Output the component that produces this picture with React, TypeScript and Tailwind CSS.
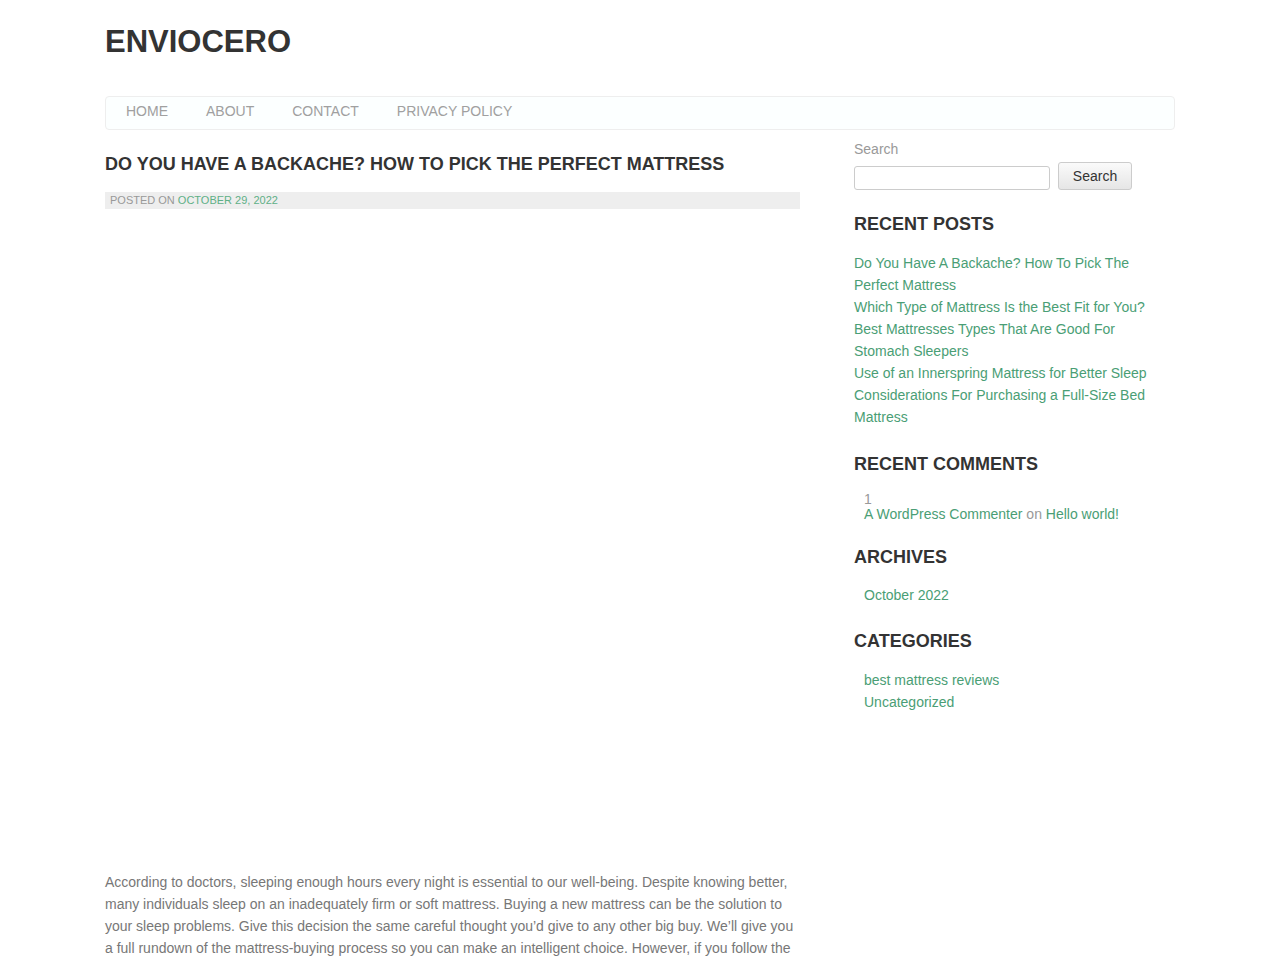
import React from "react";

// Sidebar link lists
const recentPosts = [
  "Do You Have A Backache? How To Pick The Perfect Mattress",
  "Which Type of Mattress Is the Best Fit for You?",
  "Best Mattresses Types That Are Good For Stomach Sleepers",
  "Use of an Innerspring Mattress for Better Sleep",
  "Considerations For Purchasing a Full-Size Bed Mattress",
];

const navItems = ["Home", "About", "Contact", "Privacy Policy"];

const WidgetTitle = ({ children }: { children: React.ReactNode }) => (
  <h2 className="text-[18px] font-bold uppercase text-[#333] leading-[24px]">{children}</h2>
);

const App = () => {
  return (
    <div className="min-h-[960px] bg-white font-['Liberation_Sans',Arial,sans-serif] text-[14px] text-[#777]">
      <div className="mx-auto w-[1070px]">
        {/* Header */}
        <header className="pt-[24px]">
          <h1 className="text-[31px] font-bold leading-[36px] text-[#333] uppercase">Enviocero</h1>
        </header>

        <nav className="mt-[36px] flex h-[34px] items-center rounded-[4px] border border-[#eeeeee] bg-[#fcffff] px-[20px] pb-[3px]">
          <ul className="flex gap-[38px]">
            {navItems.map((item) => (
              <li key={item}>
                <a href="#" className="uppercase text-[#a0a0a0] leading-[20px]">
                  {item}
                </a>
              </li>
            ))}
          </ul>
        </nav>

        <div className="flex">
          {/* Main column */}
          <main className="w-[695px] pt-[24px]">
            <h1 className="text-[18px] font-bold uppercase leading-[20px] text-[#333]">
              Do You Have A Backache? How To Pick The Perfect Mattress
            </h1>
            <div className="mt-[18px] flex h-[17px] items-center bg-[#eeeeee] px-[5px] pb-[1px] text-[11px] uppercase leading-[17px]">
              <span className="text-[#999]">Posted on&nbsp;</span>
              <a href="#" className="text-[#5fb087]">October 29, 2022</a>
            </div>
            {/* featured image area */}
            <div className="h-[662px]" />
            <p className="leading-[22px] text-[#777]">
              According to doctors, sleeping enough hours every night is essential to our well-being. Despite knowing better,
              many individuals sleep on an inadequately firm or soft mattress. Buying a new mattress can be the solution to
              your sleep problems. Give this decision the same careful thought you’d give to any other big buy. We’ll give you
              a full rundown of the mattress-buying process so you can make an intelligent choice. However, if you follow the
            </p>
          </main>

          {/* Sidebar */}
          <aside className="ml-[54px] w-[300px] pt-[10px]">
            <label className="block leading-[18px] text-[#999]">Search</label>
            <div className="mt-[4px] flex items-center gap-[8px]">
              <input
                type="text"
                className="mt-[4px] h-[24px] w-[196px] rounded-[3px] border border-[#cccccc] bg-white"
              />
              <button className="h-[28px] w-[74px] rounded-[3px] border border-[#cccccc] bg-gradient-to-b from-[#fafafa] to-[#e6e6e6] text-[14px] text-[#333]">
                Search
              </button>
            </div>

            <div className="mt-[22px]">
              <WidgetTitle>Recent Posts</WidgetTitle>
              <ul className="mt-[16px]">
                {recentPosts.map((p) => (
                  <li key={p} className="leading-[22px]">
                    <a href="#" className="text-[#4a9e75]">{p}</a>
                  </li>
                ))}
              </ul>
            </div>

            <div className="mt-[24px]">
              <WidgetTitle>Recent Comments</WidgetTitle>
              <ul className="mt-[16px] pl-[10px]">
                <li className="leading-[15px]">
                  <div className="text-[#999]">1</div>
                  <a href="#" className="text-[#4a9e75]">A WordPress Commenter</a>
                  <span className="text-[#999]"> on </span>
                  <a href="#" className="text-[#4a9e75]">Hello world!</a>
                </li>
              </ul>
            </div>

            <div className="mt-[23px]">
              <WidgetTitle>Archives</WidgetTitle>
              <ul className="mt-[15px] pl-[10px]">
                <li className="leading-[22px]">
                  <a href="#" className="text-[#4a9e75]">October 2022</a>
                </li>
              </ul>
            </div>

            <div className="mt-[23px]">
              <WidgetTitle>Categories</WidgetTitle>
              <ul className="mt-[16px] pl-[10px]">
                <li className="leading-[22px]">
                  <a href="#" className="text-[#4a9e75]">best mattress reviews</a>
                </li>
                <li className="leading-[22px]">
                  <a href="#" className="text-[#4a9e75]">Uncategorized</a>
                </li>
              </ul>
            </div>
          </aside>
        </div>
      </div>
    </div>
  );
};

export default App;
